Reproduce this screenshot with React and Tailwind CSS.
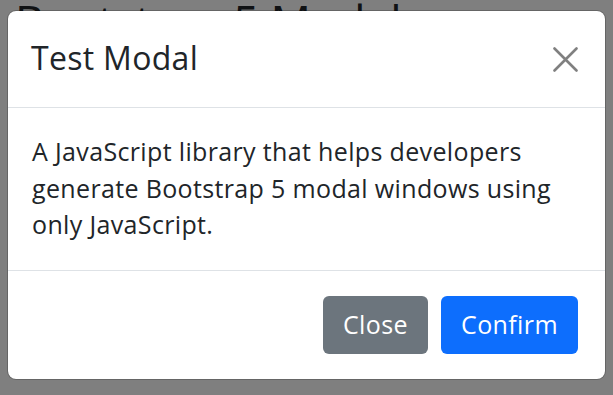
import React from "react";

function CloseIcon() {
  return (
    <svg width="25" height="25" viewBox="0 0 25 25" fill="none">
      <path d="M1.5 1.5 L23.5 23.5 M23.5 1.5 L1.5 23.5" stroke="#808080" strokeWidth="2.6" strokeLinecap="round" />
    </svg>
  );
}

export default function App() {
  return (
    <div
      className="relative h-[395px] w-full overflow-hidden bg-white text-[#212529]"
      style={{ fontFamily: '"Open Sans", "Noto Sans", sans-serif' }}
    >
      <h1 className="mt-[-5px] px-[15px] text-[45px] font-medium leading-[54px] tracking-[-0.1px]">
        Bootstrap 5 Modal
      </h1>

      <div className="absolute inset-0 bg-black/50" />

      <div className="absolute inset-0 px-[7px] pt-[10px]">
        <div className="w-[599px] rounded-[9px] border border-black/20 bg-white bg-clip-padding">
          <div className="flex h-[97px] items-center justify-between border-b border-[#dee2e6] pb-[3px] pl-[23px] pr-[24px]">
            <h5 className="text-[32px] font-normal leading-[45px] tracking-[0.3px]">Test Modal</h5>
            <button className="mr-[3px] mt-[3px] flex h-[25px] w-[25px] items-center justify-center">
              <CloseIcon />
            </button>
          </div>

          <div className="h-[162px] px-[24px] pt-[25px] text-[25px] leading-[36.5px] tracking-[0.35px]">
            A JavaScript library that helps developers generate Bootstrap 5 modal windows using only
            JavaScript.
          </div>

          <div className="flex h-[109px] items-center justify-end gap-[13px] border-t border-[#dee2e6] pr-[27px]">
            <button className="flex h-[58px] w-[105px] items-center justify-center rounded-[6px] bg-[#6c757d] text-[25px] tracking-[0.4px] text-white">
              Close
            </button>
            <button className="flex h-[58px] w-[137px] items-center justify-center rounded-[6px] bg-[#0d6efd] text-[25px] tracking-[0.4px] text-white">
              Confirm
            </button>
          </div>
        </div>
      </div>
    </div>
  );
}
